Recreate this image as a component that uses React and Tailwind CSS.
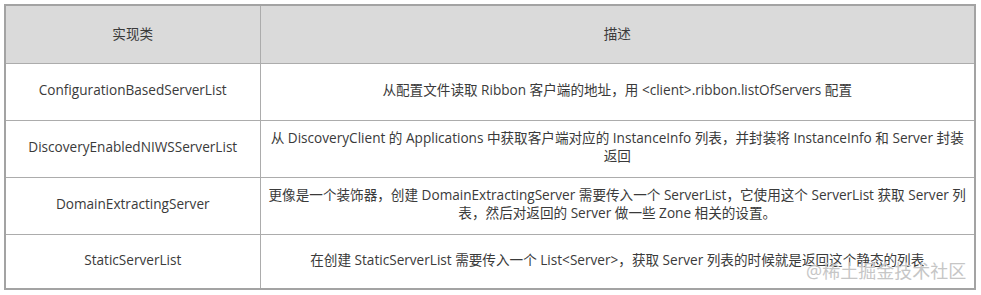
export default function App() {
  const rows = [
    {
      name: "ConfigurationBasedServerList",
      desc: ["从配置文件读取 Ribbon 客户端的地址，用 <client>.ribbon.listOfServers 配置"],
    },
    {
      name: "DiscoveryEnabledNIWSServerList",
      desc: [
        "从 DiscoveryClient 的 Applications 中获取客户端对应的 InstanceInfo 列表，并封装将 InstanceInfo 和 Server 封装",
        "返回",
      ],
    },
    {
      name: "DomainExtractingServer",
      desc: [
        "更像是一个装饰器，创建 DomainExtractingServer 需要传入一个 ServerList，它使用这个 ServerList 获取 Server 列",
        "表，然后对返回的 Server 做一些 Zone 相关的设置。",
      ],
    },
    {
      name: "StaticServerList",
      desc: ["在创建 StaticServerList 需要传入一个 List<Server>，获取 Server 列表的时候就是返回这个静态的列表"],
    },
  ];

  return (
    <div
      className="relative w-[981px] h-[295px] bg-white pt-[4px] pl-[4px] text-[#3a3a3a]"
      style={{ fontFamily: '"Open Sans", "Noto Sans CJK SC", sans-serif' }}
    >
      <table className="w-[972px] border-collapse border-2 border-[#a3a3a3] table-fixed text-[13.6px] leading-[18px]">
        <colgroup>
          <col className="w-[255px]" />
          <col />
        </colgroup>
        <thead>
          <tr className="h-[58px] bg-[#dadada]">
            <th className="font-normal border border-[#acacac] text-center">实现类</th>
            <th className="font-normal border border-[#acacac] text-center">描述</th>
          </tr>
        </thead>
        <tbody>
          {rows.map((r, i) => (
            <tr key={r.name} className={i === 3 ? "h-[55px]" : "h-[57px]"}>
              <td className="border border-[#acacac] text-center align-middle pb-[3px]">{r.name}</td>
              <td className="border border-[#acacac] text-center align-middle px-1 pb-[3px]">
                {r.desc.map((line, j) => (
                  <div key={j} className="whitespace-nowrap">{line}</div>
                ))}
              </td>
            </tr>
          ))}
        </tbody>
      </table>
      <div className="absolute left-[806px] top-[260px] text-[18px] leading-[22px] text-[#c6c6c6] whitespace-nowrap">
        @稀土掘金技术社区
      </div>
    </div>
  );
}
